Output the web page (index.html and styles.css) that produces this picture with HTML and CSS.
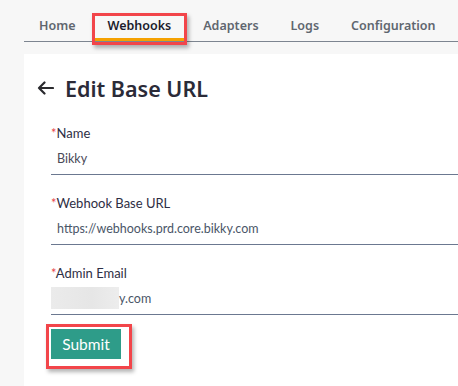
FILE: index.html
```html
<html>
    <head>
        <title>Edit Base URL</title>
        <link rel="stylesheet" href="styles.css">
    </head>
    <body>
        <ul class="tabs">
            <li class="tab">Home</li>
            <li class="tab active">Webhooks<span class="callout tab-callout"></span></li>
            <li class="tab">Adapters</li>
            <li class="tab">Logs</li>
            <li class="tab">Configuration</li>
        </ul>
        <div class="card">
            <h1 class="title">
                <svg class="back" width="17" height="14" viewBox="0 0 17 14">
                    <path d="M16 7H2M7.5 1.5L2 7l5.5 5.5" fill="none" stroke="#2a2a2e" stroke-width="2.2" stroke-linecap="round" stroke-linejoin="round"/>
                </svg>
                Edit Base URL
            </h1>
            <div class="field">
                <div class="label"><span class="req">*</span>Name</div>
                <div class="value">Bikky</div>
            </div>
            <div class="field">
                <div class="label"><span class="req">*</span>Webhook Base URL</div>
                <div class="value url">https://webhooks.prd.core.bikky.com</div>
            </div>
            <div class="field">
                <div class="label"><span class="req">*</span>Admin Email</div>
                <div class="value url"><span class="redacted"></span>y.com</div>
            </div>
            <div class="actions">
                <span class="submit-wrap">
                    <button class="submit">Submit</button>
                    <span class="callout submit-callout"></span>
                </span>
            </div>
        </div>
    </body>
</html>
```

FILE: styles.css
```css
body {
    margin: 0;
    background-color: #f7f7f7;
    font-family: Lato, "Noto Sans", sans-serif;
    color: #2e2e40;
}

ul.tabs {
    display: flex;
    align-items: flex-end;
    gap: 6px;
    list-style: none;
    margin: 0 0 0 24px;
    padding: 0 0 0 2px;
    height: 41px;
    border-bottom: 1px solid #7d8590;
    font-family: "Noto Sans", "Open Sans", sans-serif;
}

li.tab {
    position: relative;
    padding: 0 13px;
    line-height: 30px;
    font-size: 12.5px;
    font-weight: 600;
    color: #60666f;
}

li.tab.active {
    color: #1c1c2c;
    box-shadow: inset 0 -3px #f5a100;
}

.callout {
    position: absolute;
    border: 3px solid #f2454a;
    box-shadow: 2px 3px 4px rgba(0, 0, 0, 0.3);
}

.tab-callout {
    left: -2px;
    top: 2px;
    right: -3px;
    bottom: -4px;
}

.card {
    margin: 12px 0 0 24px;
    padding: 19px 0 0 13px;
    background-color: #ffffff;
    min-height: 313px;
}

h1.title {
    display: flex;
    align-items: center;
    gap: 11px;
    margin: 0 0 21px 0;
    height: 30px;
    font-family: "Noto Sans", "Open Sans", sans-serif;
    font-size: 21.5px;
    font-weight: 600;
    color: #2b2b38;
}

.field {
    margin: 0 0 19px 14px;
}

.label {
    font-size: 13px;
    line-height: 18px;
    color: #2e2e44;
}

.req {
    color: #e8454a;
}

.value {
    display: flex;
    align-items: center;
    height: 32px;
    padding-left: 6px;
    border-bottom: 1px solid #6b7890;
    font-size: 12.5px;
    color: #4a4a58;
}

.value.url {
    color: #4a5668;
}

.redacted {
    display: inline-block;
    width: 68px;
    height: 22px;
    margin-left: -6px;
    background: linear-gradient(90deg, #ebebeb, #e6e6e6 60%, #ededed);
}

.actions {
    margin: -5px 0 0 14px;
}

.submit-wrap {
    position: relative;
    display: inline-block;
}

button.submit {
    width: 70px;
    height: 30px;
    border: none;
    background-color: #2e9c89;
    color: #ffffff;
    font-family: Lato, "Noto Sans", sans-serif;
    font-size: 15.5px;
}

.submit-callout {
    left: -5px;
    top: -5px;
    right: -11px;
    bottom: -10px;
}
```
